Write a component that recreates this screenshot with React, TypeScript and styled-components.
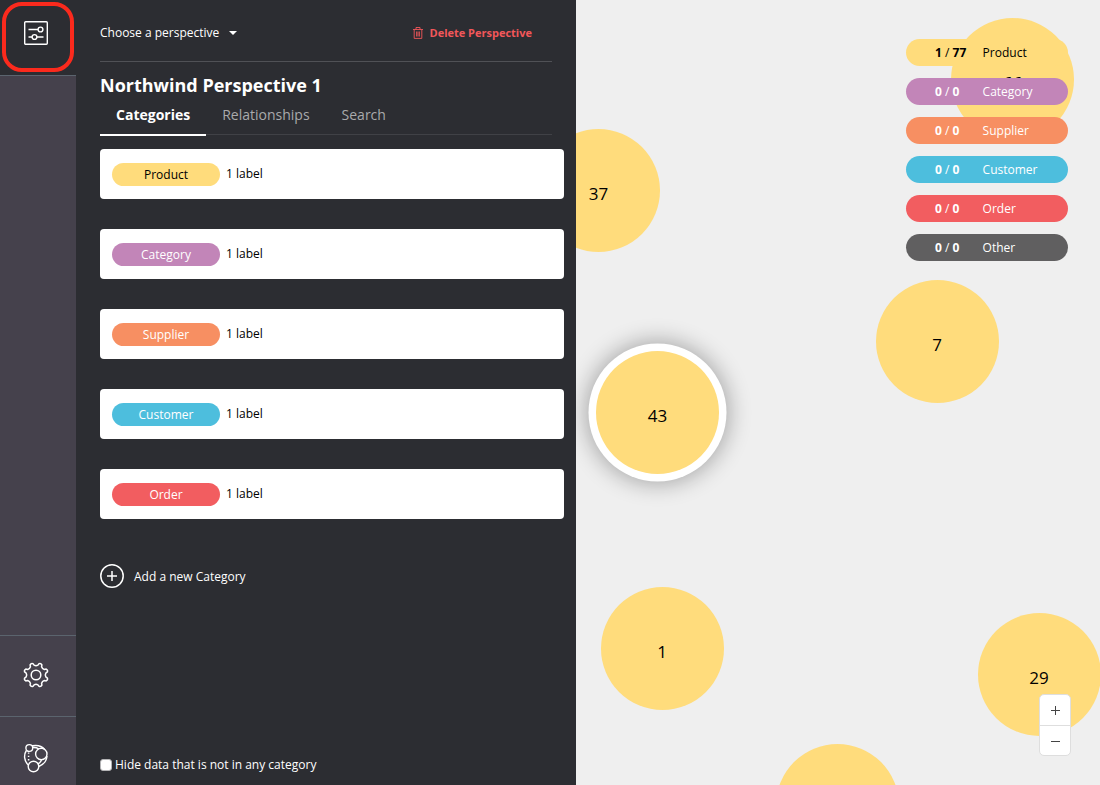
import React from "react";
import styled, { createGlobalStyle } from "styled-components";

const GlobalStyle = createGlobalStyle`
  * { box-sizing: border-box; }
  body {
    margin: 0;
    font-family: "Open Sans", "Noto Sans", sans-serif;
    font-size: 12px;
    line-height: 18px;
    color: #fff;
    background: #efefef;
  }
  button { font: inherit; color: inherit; background: none; border: 0; padding: 0; }
`;

const Shell = styled.div`
  display: grid;
  grid-template-columns: 76px 500px 1fr;
  width: 1100px;
  height: 785px;
  overflow: hidden;
`;

const Sidebar = styled.nav`
  display: flex;
  flex-direction: column;
  background: #45414c;
`;

const SideItem = styled.button<{ $height: number; $active?: boolean }>`
  position: relative;
  display: flex;
  flex: none;
  align-items: center;
  justify-content: center;
  height: ${(p) => p.$height}px;
  padding-right: 4px;
  background: ${(p) => (p.$active ? "#2c2d32" : "transparent")};
  border-top: ${(p) => (p.$active ? "0" : "1px solid #5b646e")};
  border-bottom: ${(p) => (p.$active ? "1px solid #5b646e" : "0")};
  padding-bottom: ${(p) => (p.$active ? "9px" : "2px")};
  svg { display: block; }
`;

const AboutItem = styled(SideItem)`
  padding: 14px 4px 0 0;
`;

const SideSpacer = styled.div`
  flex: 1;
`;

const Highlight = styled.span`
  position: absolute;
  left: 2px;
  top: 2px;
  width: 72px;
  height: 70px;
  border: 4px solid #fb2a1d;
  border-radius: 20px;
`;

const Panel = styled.section`
  display: flex;
  flex-direction: column;
  padding: 0 12px 0 24px;
  background: #2c2d32;
`;

const TopRow = styled.div`
  display: flex;
  align-items: center;
  justify-content: space-between;
  width: 452px;
  height: 62px;
  padding: 9px 20px 4px 0;
  border-bottom: 1px solid #505156;
`;

const Chooser = styled.button`
  display: flex;
  align-items: center;
  gap: 10px;
`;

const Caret = styled.span`
  width: 0;
  height: 0;
  border: 4px solid transparent;
  border-top-color: #fff;
  border-bottom: 0;
`;

const DeleteButton = styled.button`
  display: flex;
  align-items: center;
  gap: 6px;
  font-weight: 700;
  font-size: 11px;
  color: #f2575a;
`;

const Title = styled.h1`
  margin: 11px 0 1px;
  font-size: 18px;
  line-height: 24px;
  font-weight: 700;
`;

const Tabs = styled.div`
  display: flex;
  width: 452px;
  height: 37px;
  border-bottom: 1px solid #404146;
`;

const Tab = styled.button<{ $active?: boolean }>`
  height: 38px;
  padding: 6px 16px 0;
  font-size: 14px;
  line-height: 22px;
  display: flex;
  align-items: flex-start;
  font-weight: ${(p) => (p.$active ? 700 : 400)};
  color: ${(p) => (p.$active ? "#fff" : "#a9aaac")};
  border-bottom: 2px solid ${(p) => (p.$active ? "#fff" : "transparent")};
`;

const Cards = styled.div`
  display: flex;
  flex-direction: column;
  gap: 30px;
  margin-top: 14px;
`;

const Card = styled.article`
  display: flex;
  align-items: center;
  gap: 6px;
  height: 50px;
  padding: 0 12px;
  color: #000;
  background: #fff;
  border-radius: 4px;
`;

const Tag = styled.span<{ $bg: string; $fg: string }>`
  width: 108px;
  height: 23px;
  line-height: 24px;
  border-radius: 12px;
  text-align: center;
  color: ${(p) => p.$fg};
  background: ${(p) => p.$bg};
`;

const AddButton = styled.button`
  display: flex;
  align-items: center;
  gap: 9px;
  margin-top: 45px;
  span { padding-top: 1px; }
`;

const HideRow = styled.label`
  display: flex;
  align-items: center;
  gap: 3px;
  margin-top: auto;
  padding-bottom: 11px;
`;

const Checkbox = styled.input`
  appearance: none;
  width: 12px;
  height: 12px;
  margin: 0;
  background: #fff;
  border: 1px solid #b4b4b6;
  border-radius: 3px;
`;

const Canvas = styled.main`
  position: relative;
  overflow: hidden;
  background: #efefef;
`;

const Node = styled.div<{ $x: number; $y: number; $selected?: boolean }>`
  position: absolute;
  left: ${(p) => p.$x - 61.5}px;
  top: ${(p) => p.$y - 61.5}px;
  width: 123px;
  height: 123px;
  padding-top: 7px;
  display: flex;
  align-items: center;
  justify-content: center;
  border-radius: 50%;
  font-size: 17px;
  color: #000;
  background: #ffdc7c;
  box-shadow: ${(p) => (p.$selected ? "0 0 0 7.5px #fff, 0 0 22px 10px rgba(0, 0, 0, 0.3)" : "none")};
`;

const Legend = styled.div`
  position: absolute;
  top: 39px;
  right: 32px;
  display: flex;
  flex-direction: column;
  gap: 12px;
`;

const LegendItem = styled.div<{ $bg: string; $fg: string }>`
  display: grid;
  grid-template-columns: 47.6px 1fr;
  align-items: center;
  width: 162px;
  height: 27px;
  padding-left: 29px;
  border-radius: 14px;
  color: ${(p) => p.$fg};
  background: ${(p) => p.$bg};
`;

const Zoom = styled.div`
  position: absolute;
  right: 29px;
  top: 694px;
  width: 32px;
  height: 62px;
  display: flex;
  flex-direction: column;
  background: #fff;
  border: 1px solid #dedede;
  border-radius: 5px;
`;

const ZoomButton = styled.button`
  height: 30px;
  padding-top: 1px;
  display: flex;
  align-items: center;
  justify-content: center;
  & + & { border-top: 1px solid #dedede; }
`;

const categories = [
  { name: "Product", bg: "#ffdc7c", fg: "#000", count: 1, total: 77 },
  { name: "Category", bg: "#c285b8", fg: "#fff", count: 0, total: 0 },
  { name: "Supplier", bg: "#f78f62", fg: "#fff", count: 0, total: 0 },
  { name: "Customer", bg: "#4dbedd", fg: "#fff", count: 0, total: 0 },
  { name: "Order", bg: "#f25d60", fg: "#fff", count: 0, total: 0 },
];
const legend = [...categories, { name: "Other", bg: "#605f60", fg: "#fff", count: 0, total: 0 }];

const nodes = [
  { label: "66", x: 436.5, y: 79 },
  { label: "37", x: 22.5, y: 190 },
  { label: "7", x: 361, y: 341.5 },
  { label: "43", x: 81.6, y: 412.5, selected: true },
  { label: "1", x: 86, y: 648.3 },
  { label: "29", x: 463, y: 674.5 },
  { label: "", x: 261, y: 805 },
];

const SlidersIcon = () => (
  <svg width="24" height="24" viewBox="0 0 24 24" fill="none" stroke="#fff" strokeWidth="1.4">
    <rect x="0.7" y="0.7" width="22.6" height="22.6" rx="1" />
    <path d="M4.5 8.5H14M4.5 16H8M13 16h6.5" />
    <circle cx="16.5" cy="8.5" r="2.4" />
    <circle cx="10.5" cy="16" r="2.4" />
  </svg>
);

const GearIcon = () => {
  const teeth = Array.from({ length: 8 }, (_, i) => i * 45);
  const at = (deg: number, r: number) => {
    const a = (deg * Math.PI) / 180;
    return `${(13 + r * Math.sin(a)).toFixed(2)} ${(13 + r * Math.cos(a)).toFixed(2)}`;
  };
  const d = teeth
    .map((t, i) => `${i ? "L" : "M"}${at(t + 15, 11.8)}Q${at(t + 22.5, 13)} ${at(t + 30, 11.8)}L${at(t + 34, 10)}Q${at(t + 45, 8.8)} ${at(t + 56, 10)}`)
    .join("");
  return (
    <svg width="26" height="26" viewBox="0 0 26 26" fill="none" stroke="#fff" strokeWidth="1.5" strokeLinejoin="round">
      <path d={d + "Z"} />
      <circle cx="13" cy="13" r="4.8" />
    </svg>
  );
};

const ClusterIcon = () => (
  <svg width="26" height="30" viewBox="0 0 26 30" fill="none" stroke="#fff" strokeWidth="1.4">
    <circle cx="6.3" cy="5" r="3.4" />
    <circle cx="18.3" cy="11" r="5.7" />
    <circle cx="10.5" cy="23.5" r="5.3" />
    <path d="M9 2.8c5.5-1 10 .4 12.500 3.500M9.700 4.500c3-.2 4.600.4 6 1.300M3.400 7.500C.7 11.500.8 17.500 5.200 22M24 13c-.3 4.500-3.500 8.500-8.300 10.500M18.500 17c-.7 1.900-2 3.300-3.800 4.200" />
    <path d="M5.600 9.500v10" strokeWidth="1.500" strokeDasharray="1.300 2" />
  </svg>
);

const TrashIcon = () => (
  <svg width="10" height="12" viewBox="0 0 10 12" fill="none" stroke="currentColor" strokeWidth="0.9">
    <path d="M0 2.500h10M3 2.300V.5h4v1.800M1.200 2.700v8.700h7.600V2.700M3.600 4.500v5M5 4.500v5M6.400 4.500v5" />
  </svg>
);

const PlusCircleIcon = () => (
  <svg width="25" height="24" viewBox="0 0 25 24" fill="none" stroke="#fff" strokeWidth="1.5">
    <circle cx="12" cy="12" r="11.2" />
    <path d="M12 7v10M7 12h10" />
  </svg>
);

export default function App() {
  return (
    <Shell>
      <GlobalStyle />
      <Sidebar>
        <SideItem $height={76} $active aria-label="Perspectives">
          <SlidersIcon />
          <Highlight />
        </SideItem>
        <SideSpacer />
        <SideItem $height={81} aria-label="Settings">
          <GearIcon />
        </SideItem>
        <AboutItem $height={69} aria-label="About">
          <ClusterIcon />
        </AboutItem>
      </Sidebar>

      <Panel>
        <TopRow>
          <Chooser>
            Choose a perspective <Caret />
          </Chooser>
          <DeleteButton>
            <TrashIcon />
            Delete Perspective
          </DeleteButton>
        </TopRow>
        <Title>Northwind Perspective 1</Title>
        <Tabs>
          <Tab $active>Categories</Tab>
          <Tab>Relationships</Tab>
          <Tab>Search</Tab>
        </Tabs>
        <Cards>
          {categories.map((c) => (
            <Card key={c.name}>
              <Tag $bg={c.bg} $fg={c.fg}>{c.name}</Tag>
              <span>1 label</span>
            </Card>
          ))}
        </Cards>
        <AddButton>
          <PlusCircleIcon />
          <span>Add a new Category</span>
        </AddButton>
        <HideRow>
          <Checkbox type="checkbox" />
          Hide data that is not in any category
        </HideRow>
      </Panel>

      <Canvas>
        {nodes.map((n) => (
          <Node key={`${n.x}-${n.y}`} $x={n.x} $y={n.y} $selected={n.selected}>{n.label}</Node>
        ))}
        <Legend>
          {legend.map((c) => (
            <LegendItem key={c.name} $bg={c.bg} $fg={c.fg}>
              <span><b>{c.count}</b> / <b>{c.total}</b></span>
              <span>{c.name}</span>
            </LegendItem>
          ))}
        </Legend>
        <Zoom>
          <ZoomButton aria-label="Zoom in">
            <svg width="11" height="11" viewBox="0 0 11 11" stroke="#444" fill="none"><path d="M5.500 1v9M1 5.500h9" /></svg>
          </ZoomButton>
          <ZoomButton aria-label="Zoom out">
            <svg width="11" height="11" viewBox="0 0 11 11" stroke="#444" fill="none"><path d="M1 5.500h9" /></svg>
          </ZoomButton>
        </Zoom>
      </Canvas>
    </Shell>
  );
}
